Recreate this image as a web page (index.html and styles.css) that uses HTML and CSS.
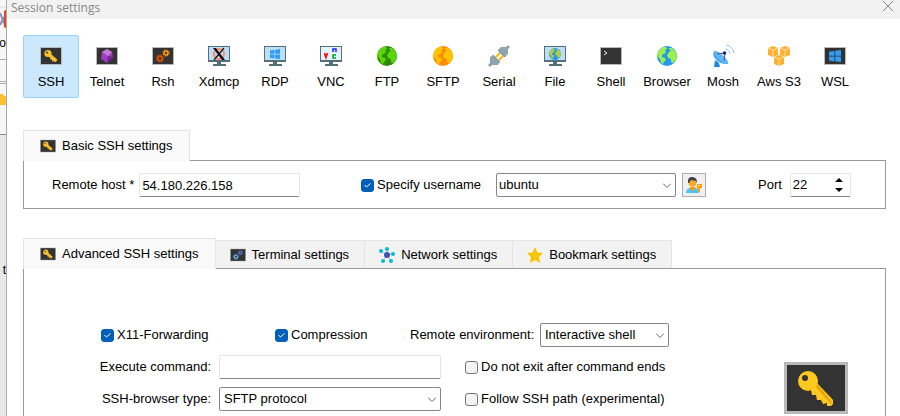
FILE: index.html
```html
<!DOCTYPE html>
<html lang="en">
<head>
  <meta charset="UTF-8">
  <meta name="viewport" content="width=device-width, initial-scale=1.0">
  <title>Session settings</title>
  <link rel="stylesheet" href="styles.css">
</head>
<body>
  <!-- shared icon shapes -->
  <svg class="sprite" aria-hidden="true">
    <symbol id="tile" viewBox="0 0 22 18">
      <rect width="22" height="18" fill="#b9b9b9"/>
      <rect x="1" y="1" width="20" height="16" fill="#333"/>
    </symbol>
    <symbol id="screen" viewBox="0 0 22 20">
      <path d="M0 0h22v16H0zM9 16h4v2h-4zM5 18h13v2H5z" fill="#546e7a"/>
      <path d="M1 1h20v13H1z" fill="#bbdefb"/>
    </symbol>
    <symbol id="key" viewBox="0 0 64 52">
      <rect width="64" height="52" fill="#b9b9b9"/>
      <rect x="3" y="3" width="58" height="46" fill="#333"/>
      <path d="M27 28l6-7 16 17v4l-2 2h-4v-3l-4 1-2-4-4 0-1-5-4 0z" fill="#ffc81e"/>
      <path d="M31 24l2-2 15 18-1 2z" fill="#e5a50a"/>
      <circle cx="24" cy="19" r="10" fill="#ffc81e"/>
      <circle cx="21" cy="16" r="3" fill="#333"/>
    </symbol>
    <symbol id="key-small" viewBox="0 0 22 18">
      <use href="#tile" width="22" height="18"/>
      <path d="M9 7.500l7.500 6.500" stroke="#fbc02d" stroke-width="3"/>
      <path d="M10.500 10v2h2v2h2" fill="none" stroke="#fbc02d" stroke-width="1"/>
      <circle cx="8" cy="6.500" r="3.600" fill="#fbc02d"/>
      <circle cx="7" cy="5.500" r="1" fill="#333"/>
    </symbol>
    <symbol id="gears" viewBox="0 0 22 18">
      <use href="#tile" width="22" height="18"/>
      <g fill="none" stroke="currentColor">
        <circle cx="8" cy="11.500" r="2.200" stroke-width="1.600"/>
        <circle cx="8" cy="11.500" r="3.400" stroke-width="1.200" stroke-dasharray="1.400 1.270"/>
      </g>
      <g fill="none" class="gear-top">
        <circle cx="14" cy="6" r="1.900" stroke-width="1.500"/>
        <circle cx="14" cy="6" r="3" stroke-width="1.200" stroke-dasharray="1.200 1.156"/>
      </g>
    </symbol>
    <symbol id="globe" viewBox="0 0 20 20">
      <circle cx="10" cy="10" r="10" class="sea"/>
      <path d="M2 4l4-3 3 0 1 2-2 1 1 2-2 2-2 1 0 2 3 1 1 2-2 2-1 2-2-1-1-4-2-2-1-2z" class="land"/>
      <path d="M12 2l3 0 3 3 2 4-1 5-3 3-2-1 0-3-3-1-1-3 2-3 2-1-2-2z" class="land"/>
    </symbol>
    <symbol id="windows" viewBox="0 0 10 10">
      <path d="M0 1.500l4.500-.7v4H0zM5.200.7L10 0v4.800H5.200zM0 5.500h4.500v4L0 8.800zM5.200 5.500H10V10l-4.800-.6z" fill="#2f9df5"/>
    </symbol>
  </svg>

  <div class="screen">
    <!-- edge of the main window behind the dialog -->
    <aside class="behind">
      <svg width="7" height="416" viewBox="0 0 7 416" aria-hidden="true">
        <path d="M0 7h7" stroke="#ddd"/>
        <path d="M0 13l5 12M0 25l4-8" stroke="#8d8dc8" stroke-width="2"/>
        <path d="M7 9L4 11v16l3 2z" fill="#e64a19"/>
        <path d="M0 59.500h7M0 81.500h7M0 83.500h7" stroke="#aaa"/>
        <path d="M0 94h3l1 2h3v9H0z" fill="#fbc02d"/>
        <path d="M0 134.500h7" stroke="#888"/>
      </svg>
      <span class="cut cut-tools">o</span>
      <span class="cut cut-text">t</span>
    </aside>

    <main class="dialog">
      <header class="title-bar">
        <h1>Session settings</h1>
        <button class="close" type="button" aria-label="Close">
          <svg width="10" height="10" viewBox="0 0 10 10"><path d="M0 0l10 10M10 0L0 10" stroke="#888"/></svg>
        </button>
      </header>

      <nav class="types">
        <button type="button" class="type active"><svg width="22" height="20"><use href="#key-small" y="1" width="22" height="18"/></svg>SSH</button>
        <button type="button" class="type">
          <svg width="22" height="20" viewBox="0 0 22 20"><use href="#tile" y="1" width="22" height="18"/><path d="M11 3l5 3 1 5-6 6-6-4 1-7z" fill="#9c3fc0"/><path d="M11 3l5 3-4 4-6-4z" fill="#c07ad6"/><path d="M12 10l5 1-6 6z" fill="#7b1fa2"/></svg>Telnet</button>
        <button type="button" class="type gears-orange"><svg width="22" height="20"><use href="#gears" y="1" width="22" height="18"/></svg>Rsh</button>
        <button type="button" class="type">
          <svg width="22" height="20" viewBox="0 0 22 20"><use href="#screen" width="22" height="20"/><circle cx="11" cy="8" r="5" fill="none" stroke="#ff8a65" stroke-width="2"/><path d="M5 2h3l9 12h-3z" fill="#111"/><path d="M16 2L6 14" stroke="#111" stroke-width="1.200"/></svg>Xdmcp</button>
        <button type="button" class="type"><svg width="22" height="20"><use href="#screen" width="22" height="20"/><use href="#windows" x="6" y="3" width="10" height="10"/></svg>RDP</button>
        <button type="button" class="type">
          <svg width="22" height="20" viewBox="0 0 22 20"><use href="#screen" width="22" height="20"/><path d="M1 1h20v13H1z" fill="#e3f2fd"/><path d="M4.500 7l1.500 4.500L7.500 7" fill="none" stroke="#f00" stroke-width="1.600"/><path d="M13 6V3h3v3" fill="none" stroke="#22f" stroke-width="1.500"/><path d="M16 9h-3v3h3" fill="none" stroke="#0a2" stroke-width="1.500"/></svg>VNC</button>
        <button type="button" class="type globe-green"><svg width="20" height="20"><use href="#globe" width="20" height="20"/></svg>FTP</button>
        <button type="button" class="type globe-orange"><svg width="20" height="20"><use href="#globe" width="20" height="20"/></svg>SFTP</button>
        <button type="button" class="type">
          <svg width="22" height="20" viewBox="0 0 22 20"><path d="M8 11l4-4M11 14l4-4" stroke="#ffb300" stroke-width="2"/><path d="M10 4l3-3 5 0 2-2 2 2-2 2 0 5-3 3-1 0-6-6z" fill="#90a4ae"/><path d="M5 9l7 7-2 3-6 0-2 2-2-2 2-2 0-6z" fill="#90a4ae"/><path d="M10 4l7 7M5 9l7 7" stroke="#78909c"/></svg>Serial</button>
        <button type="button" class="type globe-file"><svg width="22" height="20"><use href="#screen" width="22" height="20"/><use href="#globe" x="5" y="2" width="12" height="12"/></svg>File</button>
        <button type="button" class="type">
          <svg width="22" height="20" viewBox="0 0 22 20"><use href="#tile" y="1" width="22" height="18"/><path d="M4 5l3 2-3 2" fill="none" stroke="#eee"/></svg>Shell</button>
        <button type="button" class="type globe-blue"><svg width="20" height="20"><use href="#globe" width="20" height="20"/></svg>Browser</button>
        <button type="button" class="type">
          <svg width="22" height="20" viewBox="0 0 22 20"><path d="M3 14l-1 7h6l-1-4z" fill="#1e88e5"/><path d="M2 5c-3 5 4 14 14 13z" fill="#42a5f5"/><path d="M2 5c3-2 16 9 14 13C10 18 2 10 2 5z" fill="#64b5f6"/><path d="M5 8l8-1-1 8" fill="none" stroke="#455a64"/><circle cx="12.500" cy="7" r="1.800" fill="#1a237e"/><path d="M13 3q4 0 5 5M14-1q7 1 8 8" fill="none" stroke="#90caf9"/></svg>Mosh</button>
        <button type="button" class="type">
          <svg width="22" height="20" viewBox="0 0 22 20"><path d="M0 2l5-2 5 2v7l-5 2-5-2zM12 2l5-2 5 2v7l-5 2-5-2zM6 11l5-2 5 2v7l-5 2-5-2z" fill="#ffb030"/><path d="M0 2l5 2 5-2M5 4v7M12 2l5 2 5-2M17 4v7M6 11l5 2 5-2M11 13v7" fill="none" stroke="#ffe0a8"/></svg>Aws S3</button>
        <button type="button" class="type"><svg width="22" height="20"><use href="#tile" y="1" width="22" height="18"/><use href="#windows" x="5" y="4" width="12" height="12"/></svg>WSL</button>
      </nav>

      <section class="basic">
        <div class="tabs">
          <button type="button" class="tab active"><svg width="16" height="14"><use href="#key-small" width="16" height="14"/></svg>Basic SSH settings</button>
        </div>
        <div class="panel basic-panel">
          <div class="group host">
            <label for="host">Remote host *</label>
            <input id="host" class="text" type="text" value="54.180.226.158">
          </div>
          <div class="group">
            <label class="check user-check"><input type="checkbox" checked>Specify username</label>
            <select class="user" aria-label="Username"><option>ubuntu</option></select>
            <button type="button" class="user-key" aria-label="Manage users">
              <svg width="18" height="18" viewBox="0 0 18 18"><path d="M1 17q0-5 5-5h4q4 0 4 5z" fill="#4fc3f7"/><path d="M5 11h5v2l-2 2-3-2z" fill="#ff9800"/><circle cx="7.500" cy="7" r="3.800" fill="#ffa726"/><path d="M3 7V5q0-4 4-4t5 4v2l-1-2-5-1-2 3z" fill="#424242"/><path d="M12 8h5v4h-2v4h-2v-4h-1z" fill="#ffa000"/><path d="M13 9h2v1h-2z" fill="#fff3e0"/></svg>
            </button>
          </div>
          <div class="group port">
            <label for="port">Port</label>
            <div class="spinner text">
              <input id="port" type="number" value="22">
              <div class="arrows">
                <button type="button" aria-label="Increase"><svg width="8" height="4" viewBox="0 0 8 4"><path d="M0 4l4-4 4 4z"/></svg></button>
                <button type="button" aria-label="Decrease"><svg width="8" height="4" viewBox="0 0 8 4"><path d="M0 0l4 4 4-4z"/></svg></button>
              </div>
            </div>
          </div>
        </div>
      </section>

      <section class="advanced">
        <div class="tabs">
          <button type="button" class="tab active"><svg width="16" height="14"><use href="#key-small" width="16" height="14"/></svg>Advanced SSH settings</button>
          <button type="button" class="tab gears-blue"><svg width="16" height="14"><use href="#gears" width="16" height="14"/></svg>Terminal settings</button>
          <button type="button" class="tab">
            <svg width="16" height="16" viewBox="0 0 16 16"><path d="M8 8V2M8 8L2 4M8 8l6-1M8 8l-4 6M8 8l4 6" stroke="#b0bec5"/><g fill="#00bcd4"><circle cx="8" cy="2" r="2"/><circle cx="2" cy="4" r="2"/><circle cx="14" cy="7" r="2"/><circle cx="4" cy="14" r="2"/><circle cx="12" cy="14" r="2"/></g><circle cx="8" cy="8" r="3" fill="#3f51b5"/></svg>Network settings</button>
          <button type="button" class="tab">
            <svg width="16" height="16" viewBox="0 0 16 16"><path d="M8 0l2.500 5.500 5.500.5-4 4 1 6-5-3-5 3 1-6-4-4 5.500-.5z" fill="#f7c600"/></svg>Bookmark settings</button>
        </div>
        <div class="panel advanced-panel">
          <div class="options">
            <label class="check"><input type="checkbox" checked>X11-Forwarding</label>
            <label class="check"><input type="checkbox" checked>Compression</label>
            <label for="env">Remote environment:</label>
            <select id="env"><option>Interactive shell</option></select>
          </div>
          <div class="commands">
            <div class="fields">
              <label for="command">Execute command:</label>
              <input id="command" class="text" type="text">
              <label class="check"><input type="checkbox">Do not exit after command ends</label>
              <label for="browser">SSH-browser type:</label>
              <select id="browser"><option>SFTP protocol</option></select>
              <label class="check"><input type="checkbox">Follow SSH path (experimental)</label>
            </div>
            <svg class="big-key" width="64" height="52"><use href="#key" width="64" height="52"/></svg>
          </div>
        </div>
      </section>
    </main>
  </div>
</body>
</html>
```

FILE: styles.css
```css
* {
  margin: 0;
  padding: 0;
  box-sizing: border-box;
}
body {
  background: #fff;
  color: #000;
  font: 13px/16px "Liberation Sans", Arial, sans-serif;
  overflow: hidden;
}
button, input, select {
  font: inherit;
  color: inherit;
}
.sprite {
  position: absolute;
  width: 0;
  height: 0;
}
.screen {
  display: grid;
  grid-template-columns: 7px 1fr;
  height: 100vh;
}

/* window behind */
.behind {
  position: relative;
  overflow: hidden;
  background: linear-gradient(#f7f7f7 0 134px, #e8e8e8 134px);
  border-right: 1px solid #aaa;
}
.cut {
  position: absolute;
  right: 0;
  font-size: 12px;
}
.cut-tools { top: 35px; }
.cut-text { top: 262px; }

/* dialog */
.dialog {
  display: flex;
  flex-direction: column;
  min-width: 0;
}
.title-bar {
  display: flex;
  justify-content: space-between;
  align-items: flex-start;
  height: 19px;
  padding: 0 7px 0 4px;
  background: #f2f2f2;
}
.title-bar h1 {
  font: 12px/16px "Open Sans", sans-serif;
  color: #888;
}
.close {
  display: flex;
  padding-top: 1px;
  border: 0;
  background: none;
}
.types {
  display: grid;
  grid-template-columns: repeat(15, 56px);
  padding: 16px 16px 32px;
}
.type {
  display: flex;
  flex-direction: column;
  align-items: center;
  gap: 8px;
  height: 63px;
  padding-top: 10px;
  border: 1px solid transparent;
  border-radius: 2px;
  background: none;
  white-space: nowrap;
}
.type svg {
  flex: none;
  overflow: visible;
}
.type.active {
  background: #cce8ff;
  border-color: #99d1ff;
}
.gears-orange { --gear: #e65100; --gear-top: #ff9800; }
.gears-blue { --gear: #64b5f6; --gear-top: #5c7cdb; }
.gears-orange svg, .gears-blue svg { color: var(--gear); }
.gear-top { stroke: var(--gear-top); }
.sea { fill: var(--sea); }
.land { fill: var(--land); }
.globe-green { --sea: #2e8b00; --land: #5bd60a; }
.globe-orange { --sea: #ff8c00; --land: #ffc400; }
.globe-blue { --sea: #2196f3; --land: #9cf04e; }
.globe-file { --sea: #2196f3; --land: #b5cc3c; }

/* tabs */
.basic, .advanced {
  margin: 0 14px 0 16px;
}
.basic {
  margin-bottom: 29px;
}
.advanced {
  display: flex;
  flex-direction: column;
  flex: 1;
}
.tabs {
  display: flex;
  align-items: flex-end;
}
.tab {
  display: flex;
  align-items: center;
  gap: 6px;
  height: 28px;
  padding: 0 15px 0 14px;
  border: solid #e4e4e4;
  border-width: 1px 1px 0 0;
  background: #f2f2f2;
  white-space: nowrap;
}
.tab.active {
  position: relative;
  height: 31px;
  margin-bottom: -1px;
  padding: 0 16px;
  border-left-width: 1px;
  background: #f9f9f9;
}
.panel {
  border: 1px solid #999;
}
.basic-panel {
  display: grid;
  grid-template-columns: 309px 397px auto;
  justify-content: start;
  padding: 12px 28px 11px;
}
.group {
  display: flex;
  align-items: center;
}
.host { gap: 5px; }
.port { gap: 8px; }
.text {
  height: 24px;
  border: 1px solid #e5e5e5;
  border-bottom-color: #868686;
  border-radius: 2px;
  background: #fff;
}
input.text {
  min-width: 0;
  padding: 0 2px;
}
.host .text { width: 161px; }
.spinner {
  display: flex;
  width: 61px;
}
.spinner input {
  width: 40px;
  padding-left: 2px;
  border: 0;
  appearance: textfield;
}
.spinner input::-webkit-inner-spin-button {
  appearance: none;
}
.arrows {
  display: flex;
  flex-direction: column;
  justify-content: center;
  gap: 6px;
  padding-left: 4px;
}
.arrows button {
  display: flex;
  border: 0;
  background: none;
}
select {
  height: 24px;
  padding: 0 4px;
  border: 1px solid #868686;
  border-radius: 2px;
  appearance: none;
  background: #fff url("data:image/svg+xml,%3Csvg xmlns='http://www.w3.org/2000/svg' width='8' height='5'%3E%3Cpath d='M0 .5l4 4 4-4' fill='none' stroke='%23666'/%3E%3C/svg%3E") no-repeat right 4px center;
}
.user {
  width: 180px;
  margin-right: 6px;
  padding: 0 2px;
}
.user-key {
  display: grid;
  place-items: center;
  width: 24px;
  height: 24px;
  border: 1px solid #adadad;
  background: #f0f0f0;
}
.check {
  display: flex;
  align-items: center;
  gap: 3px;
  white-space: nowrap;
}
.user-check { width: 135px; }
.check input {
  flex: none;
  width: 13px;
  height: 13px;
  border: 1px solid #777;
  border-radius: 3px;
  appearance: none;
  background: #f3f3f3;
}
.check input:checked {
  border-color: #005fb8;
  background: #005fb8 url("data:image/svg+xml,%3Csvg xmlns='http://www.w3.org/2000/svg' width='7' height='5'%3E%3Cpath d='M.5 2l2 2 4-3.500' fill='none' stroke='white'/%3E%3C/svg%3E") no-repeat center;
}

/* advanced settings */
.advanced-panel {
  flex: 1;
  padding: 54px 37px 0 70px;
  border-bottom: 0;
}
.options {
  display: grid;
  grid-template-columns: 174px 135px 130px 129px;
  align-items: center;
  padding-left: 7px;
  margin-bottom: 8px;
  white-space: nowrap;
}
.commands {
  display: flex;
  justify-content: space-between;
  align-items: flex-start;
}
.fields {
  display: grid;
  grid-template-columns: 125px 222px auto;
  align-items: center;
  gap: 8px 0;
}
.fields > label:not(.check) {
  padding-right: 8px;
  text-align: right;
  white-space: nowrap;
}
.fields .check {
  padding-left: 24px;
}
.big-key {
  margin-top: 7px;
}
```
